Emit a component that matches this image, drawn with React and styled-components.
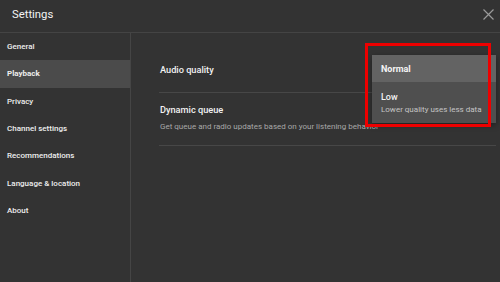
import React, { useState } from "react";
import styled, { createGlobalStyle } from "styled-components";

const GlobalStyle = createGlobalStyle`
  html, body {
    margin: 0;
    padding: 0;
    background: #333333;
  }
  body {
    font-family: Roboto, "Liberation Sans", Arial, sans-serif;
    color: #f1f1f1;
  }
`;

const sections = [
  "General",
  "Playback",
  "Privacy",
  "Channel settings",
  "Recommendations",
  "Language & location",
  "About",
];

const CloseIcon = () => (
  <svg width="11" height="11" viewBox="0 0 11 11">
    <path d="M0.5 0.5 L10.5 10.5 M10.5 0.5 L0.5 10.5" stroke="#9a9a9a" strokeWidth="1.2" fill="none" />
  </svg>
);

const App = () => {
  const [active, setActive] = useState("Playback");
  return (
    <>
      <GlobalStyle />
      <Dialog>
        <Header>
          <Title>Settings</Title>
          <CloseButton>
            <CloseIcon />
          </CloseButton>
        </Header>
        <Body>
          <Sidebar>
            {sections.map((s) => (
              <NavItem key={s} active={s === active} onClick={() => setActive(s)}>
                {s}
              </NavItem>
            ))}
          </Sidebar>
          <Content>
            <SettingRow tall>
              <SettingTitle>Audio quality</SettingTitle>
            </SettingRow>
            <SettingRow>
              <SettingTitle>Dynamic queue</SettingTitle>
              <SettingDesc>
                Get queue and radio updates based on your listening behavior
              </SettingDesc>
            </SettingRow>
          </Content>
        </Body>
        <Menu>
          <MenuItem selected>
            <MenuLabel bold>Normal</MenuLabel>
          </MenuItem>
          <MenuItem>
            <MenuLabel>Low</MenuLabel>
            <MenuSub>Lower quality uses less data</MenuSub>
          </MenuItem>
        </Menu>
        <Highlight />
      </Dialog>
    </>
  );
};

export default App;

const Dialog = styled.div`
  position: relative;
  width: 500px;
  height: 282px;
  background: #333333;
  display: flex;
  flex-direction: column;
  overflow: hidden;
`;

const Header = styled.div`
  height: 32px;
  flex: none;
  display: flex;
  align-items: center;
  justify-content: space-between;
  padding: 0 6px 0 12px;
  border-bottom: 1px solid #444444;
`;

const Title = styled.div`
  font-size: 11.3px;
  font-weight: 400;
  color: #f4f4f4;
  margin-top: -3px;
`;

const CloseButton = styled.div`
  width: 11px;
  height: 11px;
  margin-top: -3px;
  display: flex;
`;

const Body = styled.div`
  flex: 1;
  display: grid;
  grid-template-columns: 131px 1fr;
`;

const Sidebar = styled.div`
  border-right: 1px solid #454545;
  display: flex;
  flex-direction: column;
`;

const NavItem = styled.div`
  height: 27.3px;
  display: flex;
  align-items: center;
  padding-left: 7px;
  font-size: 8px;
  font-weight: ${(p) => (p.active ? 700 : 500)};
  color: #eeeeee;
  background: ${(p) => (p.active ? "#4b4b4b" : "transparent")};
  cursor: pointer;
`;

const Content = styled.div`
  padding: 0 4px 0 28px;
  display: flex;
  flex-direction: column;
`;

const SettingRow = styled.div`
  display: flex;
  flex-direction: column;
  padding: ${(p) => (p.tall ? "31px 0 16px 1px" : "11px 0 13px 1px")};
  border-bottom: 1px solid #474747;
`;

const SettingTitle = styled.div`
  font-size: 9.2px;
  line-height: 12px;
  font-weight: 500;
  color: #f2f2f2;
`;

const SettingDesc = styled.div`
  margin-top: 6px;
  font-size: 8px;
  line-height: 10px;
  color: #a8a8a8;
`;

const Menu = styled.div`
  position: absolute;
  left: 372px;
  top: 55px;
  width: 124px;
  background: #4f4f4f;
  box-shadow: 0 2px 6px rgba(0, 0, 0, 0.4);
`;

const MenuItem = styled.div`
  display: flex;
  flex-direction: column;
  justify-content: center;
  padding: 0 9px;
  height: ${(p) => (p.selected ? "27px" : "41px")};
  background: ${(p) => (p.selected ? "#636363" : "transparent")};
`;

const MenuLabel = styled.div`
  font-size: 9px;
  font-weight: ${(p) => (p.bold ? 700 : 500)};
  color: #f4f4f4;
`;

const MenuSub = styled.div`
  margin-top: 3px;
  font-size: 8px;
  color: #c4c4c4;
`;

const Highlight = styled.div`
  position: absolute;
  left: 365px;
  top: 43px;
  width: 120px;
  height: 78px;
  border: 3px solid #ee0000;
`;
